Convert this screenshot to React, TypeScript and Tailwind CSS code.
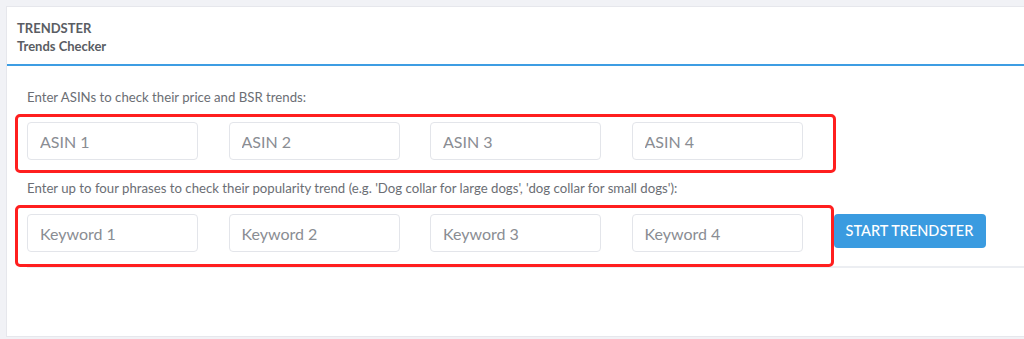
const asins = ["ASIN 1", "ASIN 2", "ASIN 3", "ASIN 4"];
const keywords = ["Keyword 1", "Keyword 2", "Keyword 3", "Keyword 4"];

const Field = ({ placeholder }: { placeholder: string }) => (
    <input
        type="text"
        placeholder={placeholder}
        className="w-[171px] h-[38px] px-3 rounded border border-[#e3e5ea] bg-white text-[16px] text-[#555] placeholder:text-[#8a8d93] outline-none"
    />
);

export default function App() {
    return (
        <div className="w-[1024px] h-[339px] overflow-hidden bg-[#f1f2f6] pl-[6px] pt-[6px] font-['Lato','Open_Sans',sans-serif]">
            <div className="relative w-[1030px] h-[331px] bg-white border-t border-l border-b border-[#e6e7ec]">
                <div className="h-[59px] pl-[10px] pt-[12px] text-[13px] font-bold text-[#5a5d63] leading-[18px] border-b-2 border-[#3d9de3]">
                    <div>TRENDSTER</div>
                    <div>Trends Checker</div>
                </div>

                <div className="pl-[20px] pt-[23px]">
                    <p className="text-[13.2px] leading-4 text-[#6b6e74]">
                        Enter ASINs to check their price and BSR trends:
                    </p>
                    <div className="flex gap-[30.5px] mt-[17px]">
                        {asins.map((a) => (
                            <Field key={a} placeholder={a} />
                        ))}
                    </div>

                    <p className="text-[13.2px] leading-4 text-[#6b6e74] mt-[20px]">
                        Enter up to four phrases to check their popularity trend (e.g. 'Dog collar for large dogs', 'dog collar for small dogs'):
                    </p>
                    <div className="flex items-start h-[38px] mt-[18px]">
                        <div className="flex gap-[30.5px]">
                            {keywords.map((k) => (
                                <Field key={k} placeholder={k} />
                            ))}
                        </div>
                        <button className="ml-[31px] w-[152px] h-[34px] rounded bg-[#3a9be0] text-white text-[14.5px] font-medium">
                            START TRENDSTER
                        </button>
                    </div>
                    <div className="mt-[14px] h-[2px] bg-[#eceef2]" />
                </div>

                <div className="absolute left-[8px] top-[107px] w-[821px] h-[59px] rounded-[5px] border-[3px] border-[#ff1f1f]" />
                <div className="absolute left-[8px] top-[198px] w-[819px] h-[62px] rounded-[5px] border-[3px] border-[#ff1f1f]" />
            </div>
        </div>
    );
}
